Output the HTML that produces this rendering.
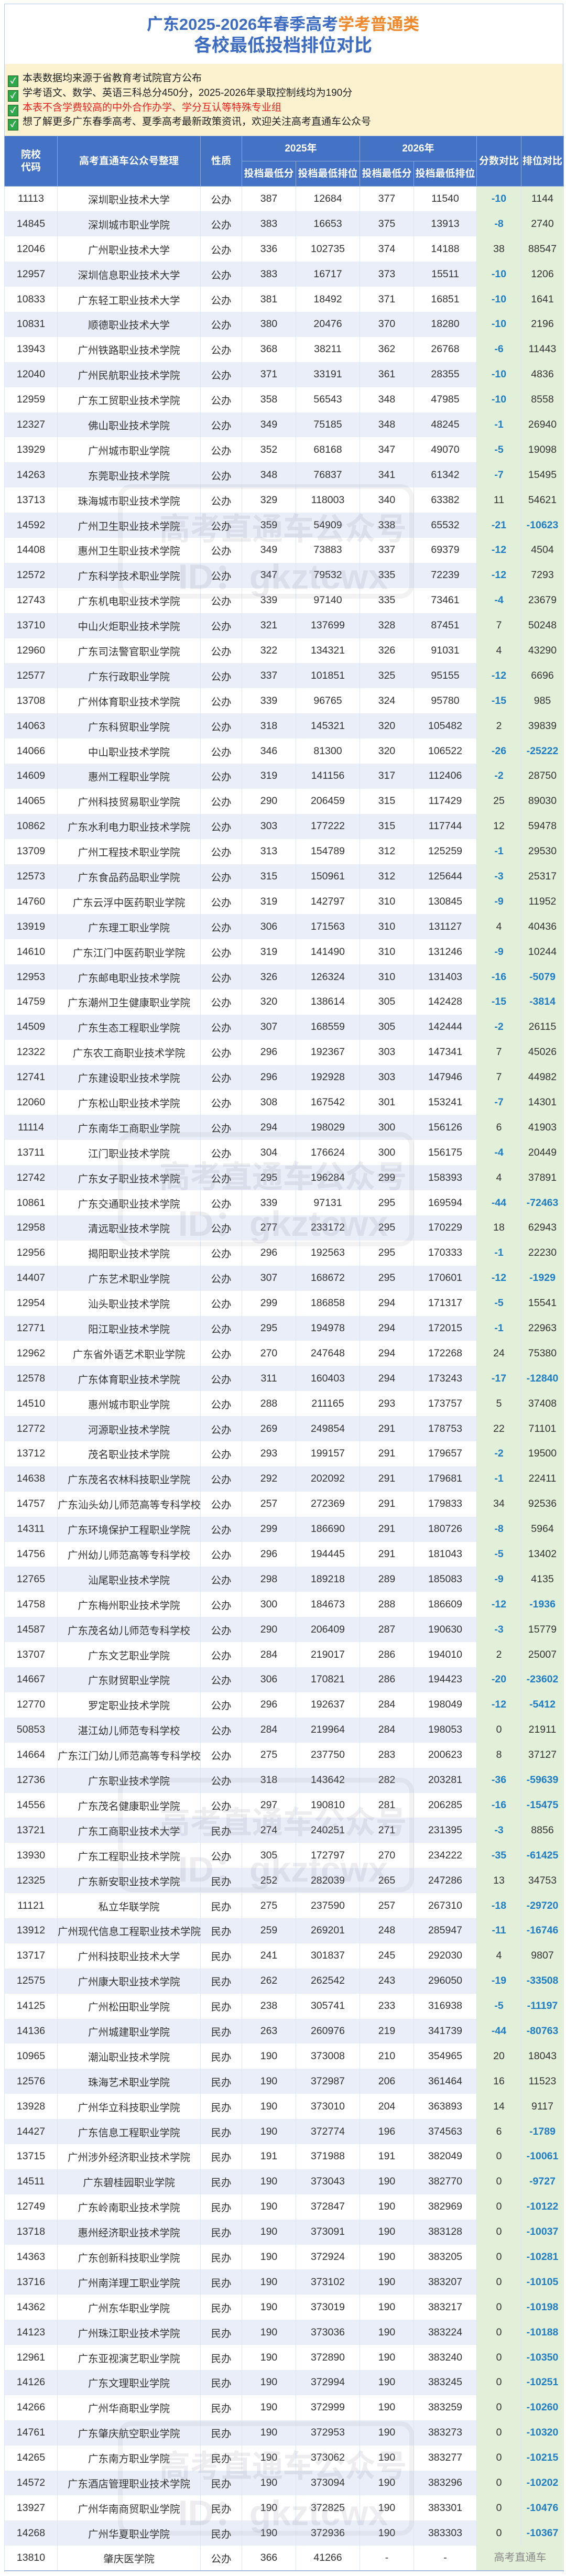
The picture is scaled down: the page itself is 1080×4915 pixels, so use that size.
<!DOCTYPE html>
<html><head><meta charset="utf-8">
<style>
*{box-sizing:border-box;margin:0;padding:0}
body{width:1080px;height:4915px;background:#fff;font-family:"Liberation Sans","Noto Sans CJK SC",sans-serif;position:relative;overflow:hidden;color:#333}
.frame{position:absolute;left:8px;top:7px;width:1067px;height:4900px;border:1px solid #b4c7e7;border-bottom:none}
.t1,.t2{position:absolute;left:0;width:1080px;text-align:center;font-weight:bold;color:#3d6cc0;white-space:nowrap}
.t1{top:28px;font-size:31px;line-height:38px}
.t1 span{color:#f0882c}
.t2{top:67px;font-size:34px;line-height:40px}
.notes{position:absolute;left:9px;top:122px;width:1065px;height:137px;background:#fdf2d0}
.nl{position:absolute;left:6px;font-size:19px;line-height:24px;color:#222;white-space:nowrap}
.nl i{display:inline-block;width:20px;height:22px;background:#2ea84a;border:1px solid #1b5a22;color:#fff;font-style:normal;font-weight:bold;font-size:15px;line-height:20px;text-align:center;vertical-align:-4px;margin-right:8px}
.nl.r{color:#e8231f}
table{position:absolute;left:8px;top:259px;width:1067px;border-collapse:collapse;table-layout:fixed}
th{background:#4472c4;color:#fff;font-size:19px;font-weight:bold;height:48px;border:1px solid #8eaadb;white-space:nowrap;line-height:24px}
td{height:47.9px;text-align:center;font-size:19.5px;white-space:nowrap;border-left:1px solid #dde4f2;border-right:1px solid #dde4f2;color:#333;overflow:visible}
tbody tr:nth-child(even) td{background:#e9eef9}
td:nth-child(8),td:nth-child(9){background:#e3f0d9!important}
td.n{color:#1e7bc6;font-weight:bold}
tbody tr:last-child td{border-bottom:2px solid #a9bde3}
.wm{position:absolute;left:0;width:1080px;text-align:center;color:rgba(140,140,160,0.16);font-weight:bold;white-space:nowrap;pointer-events:none}
.wb{position:absolute;left:225px;width:565px;height:218px;border:9px solid rgba(150,150,160,0.12);border-radius:26px}
</style></head><body>
<div class="frame"></div>
<div class="t1">广东2025-2026年春季高考<span>学考普通类</span></div>
<div class="t2">各校最低投档排位对比</div>
<div class="notes">
<div class="nl" style="top:16px"><i>✓</i>本表数据均来源于省教育考试院官方公布</div>
<div class="nl" style="top:44px"><i>✓</i>学考语文、数学、英语三科总分450分，2025-2026年录取控制线均为190分</div>
<div class="nl r" style="top:72px"><i>✓</i>本表不含学费较高的中外合作办学、学分互认等特殊专业组</div>
<div class="nl" style="top:99px"><i>✓</i>想了解更多广东春季高考、夏季高考最新政策资讯，欢迎关注高考直通车公众号</div>
</div>
<table>
<colgroup><col style="width:101px"><col style="width:273px"><col style="width:79px"><col style="width:103px"><col style="width:122px"><col style="width:103px"><col style="width:120px"><col style="width:85px"><col style="width:81px"></colgroup>
<thead>
<tr><th rowspan="2">院校<br>代码</th><th rowspan="2">高考直通车公众号整理</th><th rowspan="2">性质</th><th colspan="2">2025年</th><th colspan="2">2026年</th><th rowspan="2">分数对比</th><th rowspan="2">排位对比</th></tr>
<tr><th>投档最低分</th><th>投档最低排位</th><th>投档最低分</th><th>投档最低排位</th></tr>
</thead>
<tbody>
<tr><td>11113</td><td>深圳职业技术大学</td><td>公办</td><td>387</td><td>12684</td><td>377</td><td>11540</td><td class="n">-10</td><td>1144</td></tr>
<tr><td>14845</td><td>深圳城市职业学院</td><td>公办</td><td>383</td><td>16653</td><td>375</td><td>13913</td><td class="n">-8</td><td>2740</td></tr>
<tr><td>12046</td><td>广州职业技术大学</td><td>公办</td><td>336</td><td>102735</td><td>374</td><td>14188</td><td>38</td><td>88547</td></tr>
<tr><td>12957</td><td>深圳信息职业技术大学</td><td>公办</td><td>383</td><td>16717</td><td>373</td><td>15511</td><td class="n">-10</td><td>1206</td></tr>
<tr><td>10833</td><td>广东轻工职业技术大学</td><td>公办</td><td>381</td><td>18492</td><td>371</td><td>16851</td><td class="n">-10</td><td>1641</td></tr>
<tr><td>10831</td><td>顺德职业技术大学</td><td>公办</td><td>380</td><td>20476</td><td>370</td><td>18280</td><td class="n">-10</td><td>2196</td></tr>
<tr><td>13943</td><td>广州铁路职业技术学院</td><td>公办</td><td>368</td><td>38211</td><td>362</td><td>26768</td><td class="n">-6</td><td>11443</td></tr>
<tr><td>12040</td><td>广州民航职业技术学院</td><td>公办</td><td>371</td><td>33191</td><td>361</td><td>28355</td><td class="n">-10</td><td>4836</td></tr>
<tr><td>12959</td><td>广东工贸职业技术学院</td><td>公办</td><td>358</td><td>56543</td><td>348</td><td>47985</td><td class="n">-10</td><td>8558</td></tr>
<tr><td>12327</td><td>佛山职业技术学院</td><td>公办</td><td>349</td><td>75185</td><td>348</td><td>48245</td><td class="n">-1</td><td>26940</td></tr>
<tr><td>13929</td><td>广州城市职业学院</td><td>公办</td><td>352</td><td>68168</td><td>347</td><td>49070</td><td class="n">-5</td><td>19098</td></tr>
<tr><td>14263</td><td>东莞职业技术学院</td><td>公办</td><td>348</td><td>76837</td><td>341</td><td>61342</td><td class="n">-7</td><td>15495</td></tr>
<tr><td>13713</td><td>珠海城市职业技术学院</td><td>公办</td><td>329</td><td>118003</td><td>340</td><td>63382</td><td>11</td><td>54621</td></tr>
<tr><td>14592</td><td>广州卫生职业技术学院</td><td>公办</td><td>359</td><td>54909</td><td>338</td><td>65532</td><td class="n">-21</td><td class="n">-10623</td></tr>
<tr><td>14408</td><td>惠州卫生职业技术学院</td><td>公办</td><td>349</td><td>73883</td><td>337</td><td>69379</td><td class="n">-12</td><td>4504</td></tr>
<tr><td>12572</td><td>广东科学技术职业学院</td><td>公办</td><td>347</td><td>79532</td><td>335</td><td>72239</td><td class="n">-12</td><td>7293</td></tr>
<tr><td>12743</td><td>广东机电职业技术学院</td><td>公办</td><td>339</td><td>97140</td><td>335</td><td>73461</td><td class="n">-4</td><td>23679</td></tr>
<tr><td>13710</td><td>中山火炬职业技术学院</td><td>公办</td><td>321</td><td>137699</td><td>328</td><td>87451</td><td>7</td><td>50248</td></tr>
<tr><td>12960</td><td>广东司法警官职业学院</td><td>公办</td><td>322</td><td>134321</td><td>326</td><td>91031</td><td>4</td><td>43290</td></tr>
<tr><td>12577</td><td>广东行政职业学院</td><td>公办</td><td>337</td><td>101851</td><td>325</td><td>95155</td><td class="n">-12</td><td>6696</td></tr>
<tr><td>13708</td><td>广州体育职业技术学院</td><td>公办</td><td>339</td><td>96765</td><td>324</td><td>95780</td><td class="n">-15</td><td>985</td></tr>
<tr><td>14063</td><td>广东科贸职业学院</td><td>公办</td><td>318</td><td>145321</td><td>320</td><td>105482</td><td>2</td><td>39839</td></tr>
<tr><td>14066</td><td>中山职业技术学院</td><td>公办</td><td>346</td><td>81300</td><td>320</td><td>106522</td><td class="n">-26</td><td class="n">-25222</td></tr>
<tr><td>14609</td><td>惠州工程职业学院</td><td>公办</td><td>319</td><td>141156</td><td>317</td><td>112406</td><td class="n">-2</td><td>28750</td></tr>
<tr><td>14065</td><td>广州科技贸易职业学院</td><td>公办</td><td>290</td><td>206459</td><td>315</td><td>117429</td><td>25</td><td>89030</td></tr>
<tr><td>10862</td><td>广东水利电力职业技术学院</td><td>公办</td><td>303</td><td>177222</td><td>315</td><td>117744</td><td>12</td><td>59478</td></tr>
<tr><td>13709</td><td>广州工程技术职业学院</td><td>公办</td><td>313</td><td>154789</td><td>312</td><td>125259</td><td class="n">-1</td><td>29530</td></tr>
<tr><td>12573</td><td>广东食品药品职业学院</td><td>公办</td><td>315</td><td>150961</td><td>312</td><td>125644</td><td class="n">-3</td><td>25317</td></tr>
<tr><td>14760</td><td>广东云浮中医药职业学院</td><td>公办</td><td>319</td><td>142797</td><td>310</td><td>130845</td><td class="n">-9</td><td>11952</td></tr>
<tr><td>13919</td><td>广东理工职业学院</td><td>公办</td><td>306</td><td>171563</td><td>310</td><td>131127</td><td>4</td><td>40436</td></tr>
<tr><td>14610</td><td>广东江门中医药职业学院</td><td>公办</td><td>319</td><td>141490</td><td>310</td><td>131246</td><td class="n">-9</td><td>10244</td></tr>
<tr><td>12953</td><td>广东邮电职业技术学院</td><td>公办</td><td>326</td><td>126324</td><td>310</td><td>131403</td><td class="n">-16</td><td class="n">-5079</td></tr>
<tr><td>14759</td><td>广东潮州卫生健康职业学院</td><td>公办</td><td>320</td><td>138614</td><td>305</td><td>142428</td><td class="n">-15</td><td class="n">-3814</td></tr>
<tr><td>14509</td><td>广东生态工程职业学院</td><td>公办</td><td>307</td><td>168559</td><td>305</td><td>142444</td><td class="n">-2</td><td>26115</td></tr>
<tr><td>12322</td><td>广东农工商职业技术学院</td><td>公办</td><td>296</td><td>192367</td><td>303</td><td>147341</td><td>7</td><td>45026</td></tr>
<tr><td>12741</td><td>广东建设职业技术学院</td><td>公办</td><td>296</td><td>192928</td><td>303</td><td>147946</td><td>7</td><td>44982</td></tr>
<tr><td>12060</td><td>广东松山职业技术学院</td><td>公办</td><td>308</td><td>167542</td><td>301</td><td>153241</td><td class="n">-7</td><td>14301</td></tr>
<tr><td>11114</td><td>广东南华工商职业学院</td><td>公办</td><td>294</td><td>198029</td><td>300</td><td>156126</td><td>6</td><td>41903</td></tr>
<tr><td>13711</td><td>江门职业技术学院</td><td>公办</td><td>304</td><td>176624</td><td>300</td><td>156175</td><td class="n">-4</td><td>20449</td></tr>
<tr><td>12742</td><td>广东女子职业技术学院</td><td>公办</td><td>295</td><td>196284</td><td>299</td><td>158393</td><td>4</td><td>37891</td></tr>
<tr><td>10861</td><td>广东交通职业技术学院</td><td>公办</td><td>339</td><td>97131</td><td>295</td><td>169594</td><td class="n">-44</td><td class="n">-72463</td></tr>
<tr><td>12958</td><td>清远职业技术学院</td><td>公办</td><td>277</td><td>233172</td><td>295</td><td>170229</td><td>18</td><td>62943</td></tr>
<tr><td>12956</td><td>揭阳职业技术学院</td><td>公办</td><td>296</td><td>192563</td><td>295</td><td>170333</td><td class="n">-1</td><td>22230</td></tr>
<tr><td>14407</td><td>广东艺术职业学院</td><td>公办</td><td>307</td><td>168672</td><td>295</td><td>170601</td><td class="n">-12</td><td class="n">-1929</td></tr>
<tr><td>12954</td><td>汕头职业技术学院</td><td>公办</td><td>299</td><td>186858</td><td>294</td><td>171317</td><td class="n">-5</td><td>15541</td></tr>
<tr><td>12771</td><td>阳江职业技术学院</td><td>公办</td><td>295</td><td>194978</td><td>294</td><td>172015</td><td class="n">-1</td><td>22963</td></tr>
<tr><td>12962</td><td>广东省外语艺术职业学院</td><td>公办</td><td>270</td><td>247648</td><td>294</td><td>172268</td><td>24</td><td>75380</td></tr>
<tr><td>12578</td><td>广东体育职业技术学院</td><td>公办</td><td>311</td><td>160403</td><td>294</td><td>173243</td><td class="n">-17</td><td class="n">-12840</td></tr>
<tr><td>14510</td><td>惠州城市职业学院</td><td>公办</td><td>288</td><td>211165</td><td>293</td><td>173757</td><td>5</td><td>37408</td></tr>
<tr><td>12772</td><td>河源职业技术学院</td><td>公办</td><td>269</td><td>249854</td><td>291</td><td>178753</td><td>22</td><td>71101</td></tr>
<tr><td>13712</td><td>茂名职业技术学院</td><td>公办</td><td>293</td><td>199157</td><td>291</td><td>179657</td><td class="n">-2</td><td>19500</td></tr>
<tr><td>14638</td><td>广东茂名农林科技职业学院</td><td>公办</td><td>292</td><td>202092</td><td>291</td><td>179681</td><td class="n">-1</td><td>22411</td></tr>
<tr><td>14757</td><td>广东汕头幼儿师范高等专科学校</td><td>公办</td><td>257</td><td>272369</td><td>291</td><td>179833</td><td>34</td><td>92536</td></tr>
<tr><td>14311</td><td>广东环境保护工程职业学院</td><td>公办</td><td>299</td><td>186690</td><td>291</td><td>180726</td><td class="n">-8</td><td>5964</td></tr>
<tr><td>14756</td><td>广州幼儿师范高等专科学校</td><td>公办</td><td>296</td><td>194445</td><td>291</td><td>181043</td><td class="n">-5</td><td>13402</td></tr>
<tr><td>12765</td><td>汕尾职业技术学院</td><td>公办</td><td>298</td><td>189218</td><td>289</td><td>185083</td><td class="n">-9</td><td>4135</td></tr>
<tr><td>14758</td><td>广东梅州职业技术学院</td><td>公办</td><td>300</td><td>184673</td><td>288</td><td>186609</td><td class="n">-12</td><td class="n">-1936</td></tr>
<tr><td>14587</td><td>广东茂名幼儿师范专科学校</td><td>公办</td><td>290</td><td>206409</td><td>287</td><td>190630</td><td class="n">-3</td><td>15779</td></tr>
<tr><td>13707</td><td>广东文艺职业学院</td><td>公办</td><td>284</td><td>219017</td><td>286</td><td>194010</td><td>2</td><td>25007</td></tr>
<tr><td>14667</td><td>广东财贸职业学院</td><td>公办</td><td>306</td><td>170821</td><td>286</td><td>194423</td><td class="n">-20</td><td class="n">-23602</td></tr>
<tr><td>12770</td><td>罗定职业技术学院</td><td>公办</td><td>296</td><td>192637</td><td>284</td><td>198049</td><td class="n">-12</td><td class="n">-5412</td></tr>
<tr><td>50853</td><td>湛江幼儿师范专科学校</td><td>公办</td><td>284</td><td>219964</td><td>284</td><td>198053</td><td>0</td><td>21911</td></tr>
<tr><td>14664</td><td>广东江门幼儿师范高等专科学校</td><td>公办</td><td>275</td><td>237750</td><td>283</td><td>200623</td><td>8</td><td>37127</td></tr>
<tr><td>12736</td><td>广东职业技术学院</td><td>公办</td><td>318</td><td>143642</td><td>282</td><td>203281</td><td class="n">-36</td><td class="n">-59639</td></tr>
<tr><td>14556</td><td>广东茂名健康职业学院</td><td>公办</td><td>297</td><td>190810</td><td>281</td><td>206285</td><td class="n">-16</td><td class="n">-15475</td></tr>
<tr><td>13721</td><td>广东工商职业技术大学</td><td>民办</td><td>274</td><td>240251</td><td>271</td><td>231395</td><td class="n">-3</td><td>8856</td></tr>
<tr><td>13930</td><td>广东工程职业技术学院</td><td>公办</td><td>305</td><td>172797</td><td>270</td><td>234222</td><td class="n">-35</td><td class="n">-61425</td></tr>
<tr><td>12325</td><td>广东新安职业技术学院</td><td>民办</td><td>252</td><td>282039</td><td>265</td><td>247286</td><td>13</td><td>34753</td></tr>
<tr><td>11121</td><td>私立华联学院</td><td>民办</td><td>275</td><td>237590</td><td>257</td><td>267310</td><td class="n">-18</td><td class="n">-29720</td></tr>
<tr><td>13912</td><td>广州现代信息工程职业技术学院</td><td>民办</td><td>259</td><td>269201</td><td>248</td><td>285947</td><td class="n">-11</td><td class="n">-16746</td></tr>
<tr><td>13717</td><td>广州科技职业技术大学</td><td>民办</td><td>241</td><td>301837</td><td>245</td><td>292030</td><td>4</td><td>9807</td></tr>
<tr><td>12575</td><td>广州康大职业技术学院</td><td>民办</td><td>262</td><td>262542</td><td>243</td><td>296050</td><td class="n">-19</td><td class="n">-33508</td></tr>
<tr><td>14125</td><td>广州松田职业学院</td><td>民办</td><td>238</td><td>305741</td><td>233</td><td>316938</td><td class="n">-5</td><td class="n">-11197</td></tr>
<tr><td>14136</td><td>广州城建职业学院</td><td>民办</td><td>263</td><td>260976</td><td>219</td><td>341739</td><td class="n">-44</td><td class="n">-80763</td></tr>
<tr><td>10965</td><td>潮汕职业技术学院</td><td>民办</td><td>190</td><td>373008</td><td>210</td><td>354965</td><td>20</td><td>18043</td></tr>
<tr><td>12576</td><td>珠海艺术职业学院</td><td>民办</td><td>190</td><td>372987</td><td>206</td><td>361464</td><td>16</td><td>11523</td></tr>
<tr><td>13928</td><td>广州华立科技职业学院</td><td>民办</td><td>190</td><td>373010</td><td>204</td><td>363893</td><td>14</td><td>9117</td></tr>
<tr><td>14427</td><td>广东信息工程职业学院</td><td>民办</td><td>190</td><td>372774</td><td>196</td><td>374563</td><td>6</td><td class="n">-1789</td></tr>
<tr><td>13715</td><td>广州涉外经济职业技术学院</td><td>民办</td><td>191</td><td>371988</td><td>191</td><td>382049</td><td>0</td><td class="n">-10061</td></tr>
<tr><td>14511</td><td>广东碧桂园职业学院</td><td>民办</td><td>190</td><td>373043</td><td>190</td><td>382770</td><td>0</td><td class="n">-9727</td></tr>
<tr><td>12749</td><td>广东岭南职业技术学院</td><td>民办</td><td>190</td><td>372847</td><td>190</td><td>382969</td><td>0</td><td class="n">-10122</td></tr>
<tr><td>13718</td><td>惠州经济职业技术学院</td><td>民办</td><td>190</td><td>373091</td><td>190</td><td>383128</td><td>0</td><td class="n">-10037</td></tr>
<tr><td>14363</td><td>广东创新科技职业学院</td><td>民办</td><td>190</td><td>372924</td><td>190</td><td>383205</td><td>0</td><td class="n">-10281</td></tr>
<tr><td>13716</td><td>广州南洋理工职业学院</td><td>民办</td><td>190</td><td>373102</td><td>190</td><td>383207</td><td>0</td><td class="n">-10105</td></tr>
<tr><td>14362</td><td>广州东华职业学院</td><td>民办</td><td>190</td><td>373019</td><td>190</td><td>383217</td><td>0</td><td class="n">-10198</td></tr>
<tr><td>14123</td><td>广州珠江职业技术学院</td><td>民办</td><td>190</td><td>373036</td><td>190</td><td>383224</td><td>0</td><td class="n">-10188</td></tr>
<tr><td>12961</td><td>广东亚视演艺职业学院</td><td>民办</td><td>190</td><td>372890</td><td>190</td><td>383240</td><td>0</td><td class="n">-10350</td></tr>
<tr><td>14126</td><td>广东文理职业学院</td><td>民办</td><td>190</td><td>372994</td><td>190</td><td>383245</td><td>0</td><td class="n">-10251</td></tr>
<tr><td>14266</td><td>广州华商职业学院</td><td>民办</td><td>190</td><td>372999</td><td>190</td><td>383259</td><td>0</td><td class="n">-10260</td></tr>
<tr><td>14761</td><td>广东肇庆航空职业学院</td><td>民办</td><td>190</td><td>372953</td><td>190</td><td>383273</td><td>0</td><td class="n">-10320</td></tr>
<tr><td>14265</td><td>广东南方职业学院</td><td>民办</td><td>190</td><td>373062</td><td>190</td><td>383277</td><td>0</td><td class="n">-10215</td></tr>
<tr><td>14572</td><td>广东酒店管理职业技术学院</td><td>民办</td><td>190</td><td>373094</td><td>190</td><td>383296</td><td>0</td><td class="n">-10202</td></tr>
<tr><td>13927</td><td>广州华南商贸职业学院</td><td>民办</td><td>190</td><td>372825</td><td>190</td><td>383301</td><td>0</td><td class="n">-10476</td></tr>
<tr><td>14268</td><td>广州华夏职业学院</td><td>民办</td><td>190</td><td>372936</td><td>190</td><td>383303</td><td>0</td><td class="n">-10367</td></tr>
<tr><td>13810</td><td>肇庆医学院</td><td>公办</td><td>366</td><td>41266</td><td>-</td><td>-</td><td colspan="2" style="color:#888;font-size:20px;vertical-align:top;padding-top:6px;background:#e3f0d9">高考直通车</td></tr>
</tbody>
</table>
<div class="wb" style="top:924px"></div>
<div class="wm" style="top:962px;font-size:59px">高考直通车公众号</div>
<div class="wm" style="top:1045px;font-size:68px">ID：gkztcwx</div>
<div class="wb" style="top:2160px"></div>
<div class="wm" style="top:2198px;font-size:59px">高考直通车公众号</div>
<div class="wm" style="top:2279px;font-size:68px">ID：gkztcwx</div>
<div class="wb" style="top:3392px"></div>
<div class="wm" style="top:3430px;font-size:59px">高考直通车公众号</div>
<div class="wm" style="top:3511px;font-size:68px">ID：gkztcwx</div>
<div class="wb" style="top:4620px"></div>
<div class="wm" style="top:4658px;font-size:59px">高考直通车公众号</div>
<div class="wm" style="top:4739px;font-size:68px">ID：gkztcwx</div>
</body></html>
